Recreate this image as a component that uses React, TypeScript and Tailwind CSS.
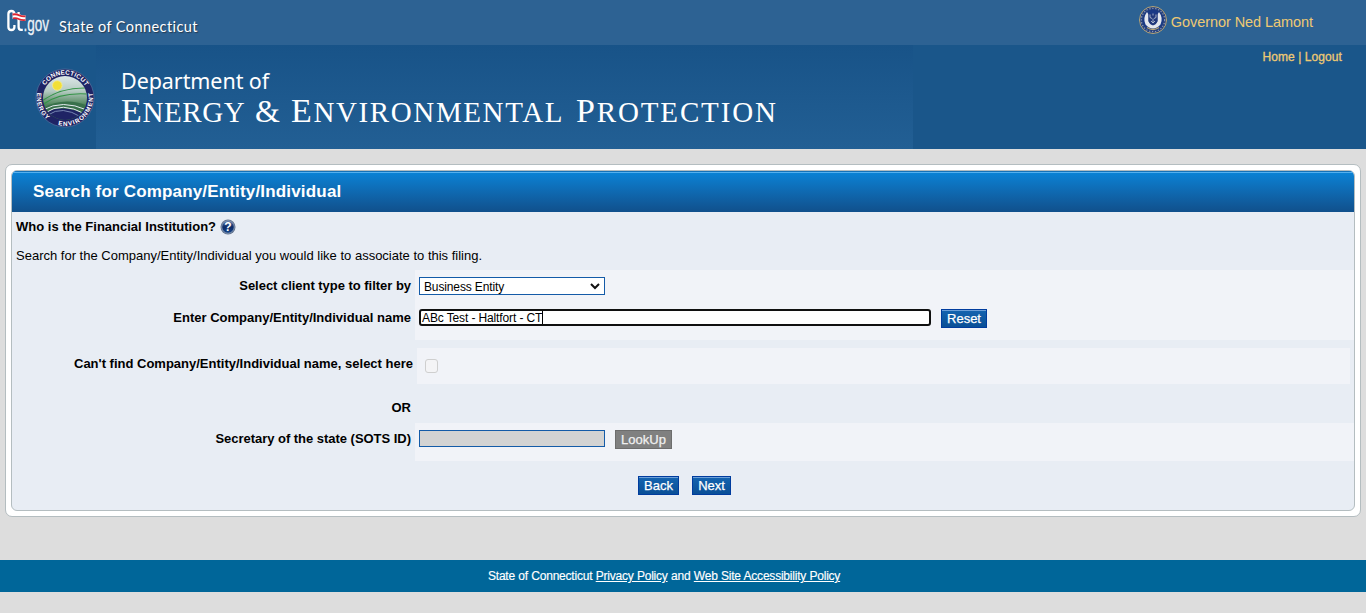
import React from "react";

const sans = "font-['Liberation_Sans',Arial,sans-serif]";

function CtGovLogo() {
  return (
    <svg width="46" height="36" viewBox="0 0 46 36" className="block overflow-visible">
      <path d="M8.400 7.500V5Q8.400 2 5.400 2T2.400 5V18Q2.400 21 5.400 21T8.400 18V16" fill="none" stroke="#fff" strokeWidth="2.300" />
      <path d="M12.600 3V18Q12.600 20.800 15 20.800H16.800" fill="none" stroke="#fff" strokeWidth="2.300" />
      <text x="17.500" y="22" fontSize="20" fill="#eef3f8" stroke="#eef3f8" strokeWidth="0.300" fontFamily="'Liberation Sans', Arial, sans-serif" textLength="25.500" lengthAdjust="spacingAndGlyphs">.gov</text>
      <path d="M6.500 4.300Q10 3.300 13 5T19.500 6.300V11.800Q16 12.300 13 10.900T6.500 9.800Z" fill="#fff" />
      <path d="M6.500 4.500Q10 3.500 13 5.200T19.500 6.500V8.200Q16 8.600 13 7.200T6.500 6.500ZM7 8.400Q10 7.600 13 9.200T19.500 10.200V11.800Q16 12.300 13 10.900T7 10.100Z" fill="#dc2531" />
    </svg>
  );
}

function DepartmentSeal() {
  return (
    <svg width="60" height="60" viewBox="0 0 60 60" className="block">
      <defs>
        <linearGradient id="hills" x1="0" y1="0" x2="0" y2="1">
          <stop offset="0" stopColor="#dfe8ea" />
          <stop offset="0.35" stopColor="#b5cbc2" />
          <stop offset="0.65" stopColor="#4d8459" />
          <stop offset="1" stopColor="#27604d" />
        </linearGradient>
        <clipPath id="sealInner"><circle cx="30" cy="30" r="22" /></clipPath>
        <path id="ringTop" d="M6.500 30A23.500 23.500 0 0 1 53.500 30" />
        <path id="ringLeft" d="M2.300 24.500A28 28 0 0 0 16 54.300" />
        <path id="ringRight" d="M22 56.800A28 28 0 0 0 57 23" />
      </defs>
      <circle cx="30" cy="30" r="29" fill="#1f2465" stroke="#55719e" strokeWidth="0.700" />
      <g clipPath="url(#sealInner)">
        <rect x="7" y="7" width="46" height="46" fill="url(#hills)" />
        <circle cx="22.300" cy="17.500" r="4.800" fill="#f2df37" stroke="#f5eb93" strokeWidth="0.800" />
        <path d="M7 33Q26 19 53 20M7 37Q24 24 53 26" stroke="#349447" strokeWidth="1.100" fill="none" />
        <path d="M7 40Q30 28 53 38V53H7Z" fill="#39714b" />
        <path d="M7 46Q28 34 53 48V53H7Z" fill="#1f2465" />
        <path d="M8 42Q27 31 52 42M10 45Q27 33 50 46" stroke="#e4ebf0" strokeWidth="1" fill="none" />
        <path d="M13 47Q27 37 46 49" stroke="#7787b3" strokeWidth="1" fill="none" />
      </g>
      <g fill="#fff" fontFamily="'Liberation Sans', Arial, sans-serif" fontWeight="700" fontSize="6.300">
        <text><textPath href="#ringTop" startOffset="13" textLength="48">CONNECTICUT</textPath></text>
        <text><textPath href="#ringLeft" startOffset="0" textLength="30">ENERGY</textPath></text>
        <text><textPath href="#ringRight" startOffset="1" textLength="56">ENVIRONMENT</textPath></text>
      </g>
    </svg>
  );
}

function GovernorSeal() {
  return (
    <svg width="28" height="28" viewBox="0 0 28 28" className="block">
      <circle cx="14" cy="14" r="13.500" fill="#24407d" stroke="#b9a777" strokeWidth="1" />
      <circle cx="14" cy="14" r="11.700" fill="none" stroke="#8d98b8" strokeWidth="1.200" strokeDasharray="1.300 1.700" />
      <circle cx="14" cy="14" r="10.200" fill="#1b3a86" />
      <path d="M8 6Q3.500 12 6.500 18.500Q10 22.500 14 22.500T21.500 18.500Q24.500 12 20 6L18.500 8.500V15.500Q17.500 18.500 14 19.500Q10.500 18.500 9.500 15.500V8.500Z" fill="#e3e7ee" />
      <path d="M9.500 7Q14 9.500 18.500 7V15Q17.500 18 14 19Q10.500 18 9.500 15Z" fill="#22397c" />
      <path d="M11 8.500V11.500L13 12.500M17 8.500V11.500L15 12.500M14 7.500V9.500M14 12.500V17M12 15L14 17L16 15" stroke="#b4bed3" strokeWidth="0.900" fill="none" />
      <path d="M8 21.500Q14 25.500 20 21.500" stroke="#b9a777" strokeWidth="1.300" fill="none" />
    </svg>
  );
}

function HelpIcon() {
  return (
    <svg width="16" height="16" viewBox="0 0 16 16" className="block">
      <defs>
        <linearGradient id="helpFill" x1="0" y1="0" x2="0" y2="1">
          <stop offset="0" stopColor="#5877a8" />
          <stop offset="0.5" stopColor="#0d2b66" />
          <stop offset="1" stopColor="#174788" />
        </linearGradient>
      </defs>
      <circle cx="8" cy="8" r="7.500" fill="#61728d" />
      <circle cx="8" cy="8" r="6.200" fill="url(#helpFill)" stroke="#a9b9d0" strokeWidth="0.600" />
      <text x="8" y="12.200" fontFamily="'Liberation Sans', Arial, sans-serif" fontWeight="700" fontSize="12" textAnchor="middle" fill="#fff">?</text>
    </svg>
  );
}

function Label({ children, className = "" }: { children: React.ReactNode; className?: string }) {
  return <div className={`shrink-0 text-right text-[13px] font-bold leading-4 ${className}`}>{children}</div>;
}

function BlueButton({ children, className = "" }: { children: React.ReactNode; className?: string }) {
  return (
    <button className={`h-[19px] border border-[#003c9e] bg-linear-to-b from-[#1464b0] to-[#0a4f96] text-[13px] leading-[17px] text-white shadow-[inset_0_1px_0_#6c9fd8] [-webkit-text-stroke:0.25px] ${className}`}>
      {children}
    </button>
  );
}

export default function App() {
  return (
    <div className={`flex h-[613px] w-[1366px] flex-col overflow-hidden bg-[#ddd] text-black ${sans}`}>
      <div className="flex h-[45px] shrink-0 justify-between bg-[#2d6293]">
        <div className="flex pl-[6px]">
          <div className="pt-[9px]"><CtGovLogo /></div>
          <div className="pl-[7px] pt-[17px] font-['Lato','Open_Sans',sans-serif] text-[14.500px] leading-5 tracking-[0.430px] text-white [text-shadow:1px_1px_1px_#263b50]">State of Connecticut</div>
        </div>
        <div className="flex pr-[53px]">
          <div className="pt-[6px]"><GovernorSeal /></div>
          <div className="pl-[4px] pt-[12px] text-[14.500px] leading-5 tracking-[-0.070px] text-[#eec973]">Governor Ned Lamont</div>
        </div>
      </div>

      <div className="flex h-[104px] shrink-0 bg-[#1a568a]">
        <div className="w-24 shrink-0 pl-[35px] pt-[23px]"><DepartmentSeal /></div>
        <div className="flex w-[817px] shrink-0 flex-col bg-linear-to-b from-[#185388] to-[#225f94] pl-[25px] pt-[22px] text-white">
          <div className="h-[27px] whitespace-nowrap font-['Noto_Sans',sans-serif] text-[21.500px] leading-[27px] tracking-[-0.070px]">Department of</div>
          <div className="flex h-[34px] whitespace-nowrap font-['Liberation_Serif',serif] text-[29px] leading-[34px]">
            <span className="w-[134px] tracking-[0.600px]"><span className="text-[34px] leading-none">E</span>NERGY</span>
            <span className="w-[36px] text-[32px]">&amp;</span>
            <span className="w-[285px] tracking-[1.620px]"><span className="text-[34px] leading-none">E</span>NVIRONMENTAL</span>
            <span className="tracking-[1.850px]"><span className="text-[34px] leading-none">P</span>ROTECTION</span>
          </div>
        </div>
        <div className="flex-1 pr-[24px] pt-[4px] text-right text-[12px] leading-4 tracking-[0.080px] text-[#eec973] [-webkit-text-stroke:0.300px]">Home | Logout</div>
      </div>

      <main className="ml-[5px] mt-[15px] h-[353px] w-[1356px] shrink-0 rounded-[7px] border border-[#b4bdc0] bg-white p-[5px]">
        <div className="flex h-full flex-col overflow-hidden rounded-[6px] border border-[#b4bdc0] bg-[#e8edf4]">
          <div className="h-[41px] shrink-0 bg-linear-to-b from-[#0984d8] to-[#10508c] pl-[21px] pt-[9px] text-[17px] font-bold leading-[23px] tracking-[0.170px] text-white shadow-[inset_0_1px_0_#1672b8,inset_0_2px_0_#55b0ee]">
            Search for Company/Entity/Individual
          </div>
          <div className="flex h-[30px] shrink-0 items-center gap-[4px] pl-1">
            <span className="text-[13px] font-bold leading-4">Who is the Financial Institution?</span>
            <HelpIcon />
          </div>
          <div className="h-[28px] shrink-0 pl-1 pt-[6px] text-[13px] leading-4">Search for the Company/Entity/Individual you would like to associate to this filing.</div>

          <div className="flex h-[70px] shrink-0">
            <div className="w-[403px] shrink-0 pr-[4px] pt-[8px]">
              <Label className="tracking-[-0.030px]">Select client type to filter by</Label>
              <Label className="mt-4">Enter Company/Entity/Individual name</Label>
            </div>
            <div className="flex-1 bg-[#f1f3f8] pl-1 pt-[7px]">
              <div className="flex h-[18px] w-[186px] items-center justify-between border border-[#145ba8] bg-white pl-1 pr-[4px] text-[12px] tracking-[-0.130px]">
                <span className="pt-px">Business Entity</span>
                <svg width="10" height="7" viewBox="0 0 10 7" className="block"><path d="M1 1L5 5L9 1" fill="none" stroke="#111" strokeWidth="2" /></svg>
              </div>
              <div className="mt-[14px] flex">
                <div className="flex h-[17px] w-[512px] items-end rounded-[3px] border-2 border-[#101010] bg-white pl-[1px] text-[12px] leading-[13px] tracking-[-0.120px]">
                  <span className="h-[13px] border-r border-black leading-[14px]">ABc Test - Haltfort - CT</span>
                </div>
                <BlueButton className="ml-[10px] w-[46px]">Reset</BlueButton>
              </div>
            </div>
          </div>

          <div className="mt-2 flex h-[36px] shrink-0 pr-1">
            <Label className="w-[405px] pr-[4px] pt-[8px]">Can&apos;t find Company/Entity/Individual name, select here</Label>
            <div className="flex-1 bg-[#f1f3f8] pl-[8px] pt-[11px]"><div className="h-[14px] w-[13px] rounded-[3px] border border-[#cfcfcf] bg-[#f4f4f6]" /></div>
          </div>
          <div className="h-[39px] shrink-0 pt-[16px]"><Label className="w-[403px] pr-[4px]">OR</Label></div>

          <div className="flex h-[38px] shrink-0">
            <Label className="w-[403px] pr-[4px] pt-[8px] tracking-[-0.030px]">Secretary of the state (SOTS ID)</Label>
            <div className="flex flex-1 bg-[#f1f3f8] pl-1 pt-[7px]">
              <div className="h-[17px] w-[186px] border border-[#145ba8] bg-[#d3d3d3]" />
              <button className="ml-[10px] h-[19px] w-[57px] border border-[#6d6d6d] bg-[#808080] text-[13px] leading-[17px] text-[#f0f0f0] [-webkit-text-stroke:0.250px]">LookUp</button>
            </div>
          </div>
          <div className="flex gap-[13px] pl-[626px] pt-[15px]">
            <BlueButton className="w-[41px]">Back</BlueButton>
            <BlueButton className="w-[39px]">Next</BlueButton>
          </div>
        </div>
      </main>

      <footer className="mt-[43px] h-8 shrink-0 bg-[#006699] pl-[488px] pt-[8px] text-[12px] leading-4 tracking-[-0.220px] text-white [-webkit-text-stroke:0.150px] [word-spacing:0.300px]">
        State of Connecticut <a className="underline">Privacy Policy</a> and <a className="underline">Web Site Accessibility Policy</a>
      </footer>
    </div>
  );
}
